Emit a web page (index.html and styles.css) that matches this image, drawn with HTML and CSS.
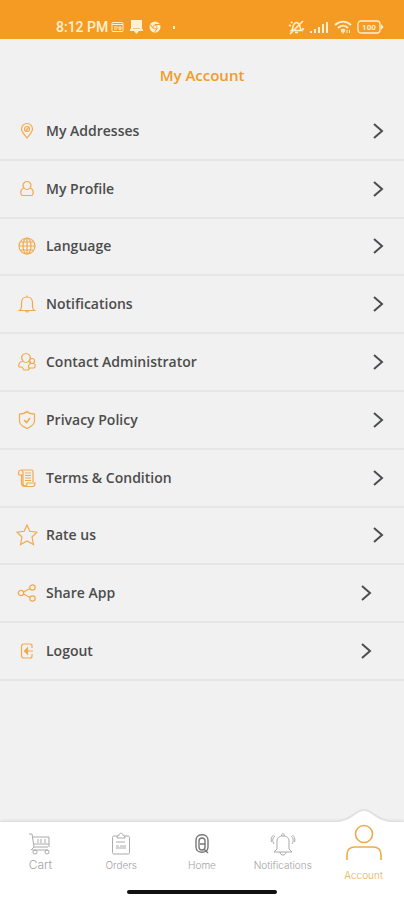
FILE: index.html
```html
<!DOCTYPE html>
<html lang="en">
<head>
<meta charset="utf-8">
<meta name="viewport" content="width=device-width, initial-scale=1">
<title>My Account</title>
<link rel="stylesheet" href="styles.css">
</head>
<body>
<div class="screen">
  <div class="status">
    <div class="status-group">
      <span class="time">8:12 PM</span>
      <svg width="13" height="12" viewBox="0 0 13 12" fill="none" stroke="currentColor"><rect x="1" y="1.5" width="11" height="9" rx="1"/><path d="M1 3.500h11M3 6h4M3 8h3M8 6h2v2.500h-2z"/></svg>
      <svg class="gap-icon" width="13" height="14" viewBox="0 0 13 14" fill="currentColor"><path d="M1 0h11v9h1v2H9l-2.500 3L4 11H0V9h1z"/><path d="M3 8.500h7" stroke="#f59b23" opacity=".5"/></svg>
      <svg class="gap-icon" width="12" height="12" viewBox="0 0 12 12"><circle cx="6" cy="6" r="5.500" fill="currentColor"/><path d="M6 3.500h5M3.800 7.200L1.500 3.400M8.200 7.200L5.800 11" stroke="#f59b23"/><circle cx="6" cy="6" r="2" fill="currentColor" stroke="#f59b23" stroke-width=".8"/></svg>
      <span class="dot"></span>
    </div>
    <div class="status-group status-right">
      <svg width="17" height="15" viewBox="0 0 17 15" fill="none" stroke="currentColor" stroke-width="1.600"><path d="M3.500 10.500c2.500-2 0-7 5-8 5 1 2.500 6 5 8zM7 12.500h3M2 14L15 1M1 5l2 1M14 8.500l2 1M3 2l1.500 1"/></svg>
      <svg width="19" height="13" viewBox="0 0 19 13" fill="currentColor"><path d="M0 10h2v2H0zM4 8h2v4H4zM8 6h2v6H8zM12 3h2v9h-2zM16 1h2v11h-2z"/></svg>
      <svg width="18" height="14" viewBox="0 0 18 14" fill="none" stroke="currentColor" stroke-width="2"><path d="M1 5c5-4.500 11-4.500 16 0M4 8c3-3 7-3 10 0M7 10.500c1.300-1 2.700-1 4 0"/><path d="M9 13.500l-1.500-2h3zM13 10v3M15.500 10v3" stroke-width="1"/></svg>
      <svg width="27" height="14" viewBox="0 0 27 14"><rect x="1" y="1" width="22" height="12" rx="3" fill="none" stroke="currentColor" stroke-width="1.300"/><path d="M24 4l2.500 3-2.500 3z" fill="currentColor"/><text class="battery-text" x="12" y="10" text-anchor="middle">100</text></svg>
    </div>
  </div>

  <main class="content">
    <h1 class="title">My Account</h1>
    <ul class="menu">
      <li><a class="row" href="#addresses">
        <svg class="icon" viewBox="0 0 22 22"><path d="M11 18C8.500 14.500 5.500 12 5.500 9a5.500 5.500 0 0 1 11 0c0 3-3 5.500-5.500 9z"/><circle cx="11" cy="9" r="2.500"/><path d="M9.500 11L13 7"/></svg>
        <span>My Addresses</span><svg class="chevron" viewBox="0 0 12 18"><path d="M2 2l8 7-8 7"/></svg></a></li>
      <li><a class="row" href="#profile">
        <svg class="icon" viewBox="0 0 22 22"><path d="M8 10C5.500 7 8 3.500 11 3.500s5.500 3.500 3 6.500c-1.500 2-4.500 2-6 0zM8 10c-3 1-3.500 4-3 6 0 1 1 1.500 2 1.500h8c1 0 2-.5 2-1.500.5-2 0-5-3-6"/></svg>
        <span>My Profile</span><svg class="chevron" viewBox="0 0 12 18"><path d="M2 2l8 7-8 7"/></svg></a></li>
      <li><a class="row" href="#language">
        <svg class="icon" viewBox="0 0 22 22"><circle cx="11" cy="11" r="8"/><ellipse cx="11" cy="11" rx="4" ry="8"/><path d="M11 3v16M3 11h16M4.500 7h13M4.500 15h13"/></svg>
        <span>Language</span><svg class="chevron" viewBox="0 0 12 18"><path d="M2 2l8 7-8 7"/></svg></a></li>
      <li><a class="row" href="#notifications">
        <svg class="icon" viewBox="0 0 22 22"><path d="M3.500 17.500h15c-1.500-1-2-2-2-4V9.500c0-3-2-5.500-5.500-5.500S5.500 6.500 5.500 9.500v4c0 2-.5 3-2 4zM11 4V2.500M9.500 17.500a1.500 1.500 0 0 0 3 0"/></svg>
        <span>Notifications</span><svg class="chevron" viewBox="0 0 12 18"><path d="M2 2l8 7-8 7"/></svg></a></li>
      <li><a class="row" href="#contact">
        <svg class="icon" viewBox="0 0 22 22"><path d="M7 10C4 6 6.500 2.500 10 2.500S16 6 13 10c-1.500 2-4.500 2-6 0zM7 10c-3.500 1-5 3-4 6h3l2 3h4l2-2M13 10l2 2"/><circle cx="16" cy="10" r="2.500"/><path d="M14.500 12.500c-2 1-2.500 3-1.500 4.500h5c2-1 1.500-4-.5-4.500"/></svg>
        <span>Contact Administrator</span><svg class="chevron" viewBox="0 0 12 18"><path d="M2 2l8 7-8 7"/></svg></a></li>
      <li><a class="row" href="#privacy">
        <svg class="icon" viewBox="0 0 22 22"><path d="M11 2.500C9 4.500 6.500 5 3.500 5v7c0 4 4 6 7.500 7.500 3.500-1.500 7.500-3.500 7.500-7.500V5c-3 0-5.500-.5-7.500-2.500z"/><path d="M8 11l2.500 2.500L14 9" stroke-width="1.500"/></svg>
        <span>Privacy Policy</span><svg class="chevron" viewBox="0 0 12 18"><path d="M2 2l8 7-8 7"/></svg></a></li>
      <li><a class="row" href="#terms">
        <svg class="icon" viewBox="0 0 22 22"><path d="M5 8H3c-1-3 0-5 2-5h10c2 0 2.500 1.500 2 4v8M5 3c2 0 2 2 2 5v8M5 8h2M7 16c0 4 4 4 4 0h8c0 2-.5 3.500-2 3.500H8.500c-2 0-3-1-3-3.500V8M9 6h6M9 8.500h6M9 11h6M9 13.500h6"/></svg>
        <span>Terms &amp; Condition</span><svg class="chevron" viewBox="0 0 12 18"><path d="M2 2l8 7-8 7"/></svg></a></li>
      <li><a class="row" href="#rate">
        <svg class="icon" viewBox="0 0 22 22"><path d="M11 1l2.800 6.300 7.200.9-5 4.800 1.500 7.500L11 17l-6.500 3.500L6 13 1 8.200l7.200-.9z"/></svg>
        <span>Rate us</span><svg class="chevron" viewBox="0 0 12 18"><path d="M2 2l8 7-8 7"/></svg></a></li>
      <li><a class="row row-inset" href="#share">
        <svg class="icon" viewBox="0 0 22 22"><circle cx="5" cy="11" r="2.700"/><circle cx="16.500" cy="5.500" r="2.700"/><circle cx="16.500" cy="16.500" r="2.700"/><path d="M7.500 10L14 6.500M7.500 12l6.500 3.500"/></svg>
        <span>Share App</span><svg class="chevron" viewBox="0 0 12 18"><path d="M2 2l8 7-8 7"/></svg></a></li>
      <li><a class="row row-inset" href="#logout">
        <svg class="icon" viewBox="0 0 22 22"><path d="M16 8V6c0-1.500-.5-2-2-2H8C6.500 4 5.500 5 5.500 6.500v9C5.500 17 6.500 18 8 18h6c1.500 0 2-.5 2-2v-2M17 11H9"/><path d="M11.500 8L8.500 11l3 3z" fill="#f3a94b"/></svg>
        <span>Logout</span><svg class="chevron" viewBox="0 0 12 18"><path d="M2 2l8 7-8 7"/></svg></a></li>
    </ul>
  </main>

  <nav class="tabs">
    <a class="tab tab-cart" href="#cart">
      <svg width="24" height="24" viewBox="0 0 24 24"><path d="M1 2h3l2 13h14M5 5h16v10M6 12h15M10 7v4M13 7v4M17 7v4M4 18h16M6 15l-3 3"/><circle cx="7" cy="20" r="2"/><circle cx="19" cy="20" r="2"/></svg>
      <span>Cart</span></a>
    <a class="tab" href="#orders">
      <svg width="24" height="24" viewBox="0 0 24 24"><path d="M9 4H5c-1 0-1.500.5-1.500 1.500v15c0 1 .5 1.500 1.500 1.500h14c1 0 1.500-.5 1.500-1.500v-15c0-1-.5-1.500-1.500-1.500h-4M8 6h8c0-2-1-2.500-2-2.500 0-3-4-3-4 0C9 3.500 8 4 8 6zM7 10h9M7 14h3M11 14h6M7 16h10"/></svg>
      <span>Orders</span></a>
    <a class="tab tab-home" href="#home">
      <svg width="24" height="24" viewBox="0 0 24 24"><path d="M6 8c0-7 12-7 12 0v7c0 7-12 7-12 0zM9 9c0-4 6-4 6 0v6c0 4-6 4-6 0zM10 12h5M14 17l4 4"/></svg>
      <span>Home</span></a>
    <a class="tab" href="#alerts">
      <svg width="26" height="24" viewBox="0 0 26 24"><path d="M4 20h18l-3-3V9c0-3-2-5-6-5S7 6 7 9v8zM11.500 4c0-3 3-3 3 0M10 20c0 4 6 4 6 0M4 12C2 9 2.500 6 5 4M1.500 10c-1-3 0-5 2-7M22 12c2-3 1.500-6-1-8M24.500 10c1-3 0-5-2-7"/></svg>
      <span>Notifications</span></a>
    <a class="tab tab-active" href="#account" aria-current="page">
      <svg class="bump" viewBox="0 0 54 16"><path class="bump-fill" d="M0 13C14 13 18 2 27 2s13 11 27 11v3H0z"/><path class="bump-line" d="M0 13C14 13 18 2 27 2s13 11 27 11"/></svg>
      <svg width="38" height="38" viewBox="0 0 38 38"><circle cx="19" cy="10" r="8.500"/><path d="M2 36v-5c0-5 3-8 8-8h18c5 0 8 3 8 8v5"/></svg>
      <span>Account</span></a>
  </nav>
  <div class="home-area"><div class="home-bar"></div></div>
</div>
</body>
</html>
```
FILE: styles.css
```css
* { box-sizing: border-box; }
body {
  margin: 0;
  background: #f1f1f1;
  color: #4c4c4c;
  font-family: "Open Sans", "Liberation Sans", sans-serif;
}
a { color: inherit; text-decoration: none; }
svg { display: block; flex: none; }

.screen { display: flex; flex-direction: column; min-height: 100vh; }

.status {
  display: flex;
  justify-content: space-between;
  align-items: flex-end;
  height: 39px;
  padding: 0 20px 4px 56px;
  background: #f59b23;
  color: #fff0d2;
}
.status-group { display: flex; align-items: center; height: 16px; }
.status-right { gap: 5px; }
.time { margin-right: 3px; font: 500 14px/16px Roboto, sans-serif; }
.gap-icon { margin-left: 6px; }
.dot { width: 2px; height: 3px; margin-left: 12px; background: currentColor; }
.battery-text { fill: currentColor; font: 700 8px Roboto, sans-serif; }

.content { flex: 1; }
.title {
  margin: 0;
  padding: 26px 0 18px;
  color: #f29b26;
  font-size: 15px;
  line-height: 20px;
  font-weight: 600;
  text-align: center;
}
.menu {
  display: grid;
  grid-auto-rows: 1fr;
  min-height: 578px;
  margin: 0;
  padding: 0;
  list-style: none;
}
.menu li { display: grid; border-bottom: 2px solid #e6e6e6; }
.row {
  display: flex;
  align-items: center;
  gap: 8px;
  padding: 0 20px 0 16px;
  font-size: 14px;
  line-height: 20px;
  font-weight: 600;
}
.row-inset { padding-right: 32px; }
.icon {
  width: 22px;
  height: 22px;
  fill: none;
  stroke: #f3a94b;
  stroke-width: 1.2;
}
.chevron {
  width: 12px;
  height: 18px;
  margin-left: auto;
  fill: none;
  stroke: #4b4e51;
  stroke-width: 2;
}

.tabs {
  display: grid;
  grid-template-columns: repeat(5, 1fr);
  height: 64px;
  background: #fff;
  box-shadow: 0 -1px 3px #d4d4d4;
}
.tab {
  position: relative;
  display: flex;
  flex-direction: column;
  align-items: center;
  gap: 1px;
  padding-top: 10px;
  color: #a2a2a2;
  font-size: 10px;
  line-height: 16px;
  font-family: Inter, sans-serif;
  font-weight: 300;
}
.tab svg { fill: none; stroke: #aaa; }
.tab-cart { font-size: 12px; }
.tab-home svg { stroke: #777; stroke-width: 1.4; }
.tab-active { gap: 5px; padding-top: 2px; color: #e9ad4b; }
.tab-active svg { position: relative; stroke: #e9ad4b; stroke-width: 1.6; }
.tab-active .bump {
  position: absolute;
  top: -14px;
  left: 50%;
  width: 54px;
  height: 16px;
  margin-left: -27px;
  stroke: none;
}
.tab-active .bump-fill { fill: #fff; }
.tab-active .bump-line { stroke: #e2e2e2; stroke-width: 2; }

.home-area { display: flex; justify-content: center; height: 14px; padding-top: 4px; background: #fff; }
.home-bar { width: 37%; height: 4px; border-radius: 2px; background: #111; }
```
